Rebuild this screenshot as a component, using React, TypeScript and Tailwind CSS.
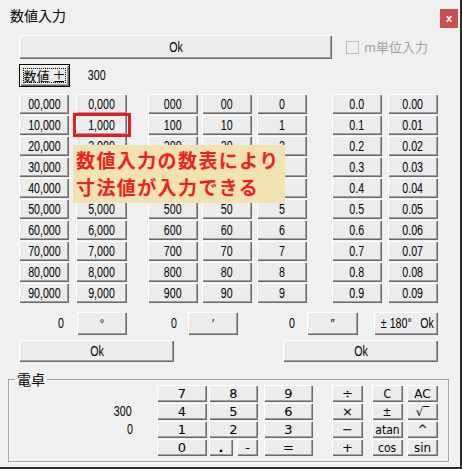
import clsx from "clsx";

const btn =
  "flex items-center justify-center bg-[#ececec] text-black shadow-[inset_1px_1px_#ffffff,inset_-1px_-1px_#696969,inset_-2px_-2px_#a0a0a0]";
const narrow = "font-['Liberation_Sans',sans-serif] text-[14px]";

function Btn({ children, className }: { children?: React.ReactNode; className?: string }) {
  return <button className={clsx(btn, className)}>{children}</button>;
}

// the dialog uses a tall narrow bitmap font, so squeeze the digits a bit
function N({ children }: { children: React.ReactNode }) {
  return <span className="inline-block scale-x-[0.76] whitespace-nowrap">{children}</span>;
}

const cols: { ml: string; w: string; items: string[] }[] = [
  { ml: "ml-[19px]", w: "w-[50px]", items: Array.from({ length: 10 }, (_, i) => `${i}0,000`) },
  { ml: "ml-[7px]", w: "w-[51px]", items: Array.from({ length: 10 }, (_, i) => `${i},000`) },
  { ml: "ml-[21px]", w: "w-[50px]", items: Array.from({ length: 10 }, (_, i) => `${i}00`) },
  { ml: "ml-[4px]", w: "w-[50px]", items: Array.from({ length: 10 }, (_, i) => `${i}0`) },
  { ml: "ml-[5px]", w: "w-[50px]", items: Array.from({ length: 10 }, (_, i) => `${i}`) },
  { ml: "ml-[25px]", w: "w-[50px]", items: Array.from({ length: 10 }, (_, i) => `0.${i}`) },
  { ml: "ml-[6px]", w: "w-[50px]", items: Array.from({ length: 10 }, (_, i) => `0.0${i}`) },
];

export default function App() {
  return (
    <div className="relative w-[462px] h-[469px] overflow-hidden bg-[#f0f0f0] border-r-2 border-b-2 border-[#2b2b2b] font-['Noto_Sans_CJK_JP',sans-serif] text-black">
      {/* title bar */}
      <div className="h-[30px] flex items-center justify-between pl-[10px] pr-[2px]">
        <span className="text-[14px]">数値入力</span>
        <div className="w-[18px] h-[19px] bg-[#c75050] flex items-center justify-center text-white text-[11px] font-bold font-['Liberation_Sans',sans-serif] mt-[6px]">
          x
        </div>
      </div>

      {/* Ok + checkbox */}
      <div className="mt-[5px] flex items-center">
        <Btn className={clsx("ml-[19px] w-[313px] h-[24px]", narrow)}>
          <N>Ok</N>
        </Btn>
        <div className="ml-[14px] w-[13px] h-[13px] border border-[#bcbcbc] bg-[#f0f0f0]" />
        <span className="ml-[5px] text-[13px] text-[#a0a0a0]">m単位入力</span>
      </div>

      {/* 数値 ± */}
      <div className="mt-[5px] flex items-center">
        <button className="ml-[19px] w-[51px] h-[23px] border border-black bg-[#ececec] shadow-[inset_1px_1px_#ffffff,inset_-1px_-1px_#696969,inset_-2px_-2px_#a0a0a0] p-[3px]">
          <div className="w-full h-full border border-dotted border-black flex items-center justify-center text-[13px] leading-none whitespace-nowrap">
            数値 ±
          </div>
        </button>
        <span className={clsx("ml-[15px]", narrow)}>
          <N>300</N>
        </span>
      </div>

      {/* number grid */}
      <div className={clsx("mt-[7px] flex", narrow)}>
        {cols.map((c, ci) => (
          <div key={ci} className={clsx("flex flex-col gap-[1px]", c.ml, c.w)}>
            {c.items.map((t) => (
              <Btn key={t} className="h-[20px] w-full">
                <N>{t}</N>
              </Btn>
            ))}
          </div>
        ))}
      </div>

      {/* degree row */}
      <div className={clsx("mt-[9px] flex items-center h-[23px]", narrow)}>
        <span className="ml-[19px] w-[46px] text-right">
          <N>0</N>
        </span>
        <Btn className="ml-[12px] w-[50px] h-[23px] text-[11px]">°</Btn>
        <span className="w-[51px] text-right">
          <N>0</N>
        </span>
        <Btn className="ml-[10px] w-[50px] h-[23px] text-[12px]">′</Btn>
        <span className="w-[58px] text-right">
          <N>0</N>
        </span>
        <Btn className="ml-[11px] w-[51px] h-[23px] text-[12px]">″</Btn>
        <Btn className="ml-[16px] w-[64px] h-[23px] gap-[2px]">
          <N>± 180°</N>
          <N>Ok</N>
        </Btn>
      </div>

      {/* Ok row */}
      <div className={clsx("mt-[5px] flex items-center", narrow)}>
        <Btn className="ml-[19px] w-[155px] h-[22px]">
          <N>Ok</N>
        </Btn>
        <Btn className="ml-[109px] w-[155px] h-[22px]">
          <N>Ok</N>
        </Btn>
      </div>

      {/* 電卓 */}
      <fieldset className="mt-[11px] ml-[8px] w-[441px] h-[89px] border border-[#a0a0a0] shadow-[inset_1px_1px_#ffffff,1px_1px_#ffffff] px-0">
        <legend className="ml-[6px] px-[2px] text-[14px] leading-[12px]">電卓</legend>
        <div className="flex font-['DejaVu_Sans',sans-serif] text-[13px]">
          <div className={clsx("w-[125px] flex flex-col gap-[1px]", narrow)}>
            <div className="h-[17px]" />
            <div className="h-[17px] flex items-center justify-end">
              <N>300</N>
            </div>
            <div className="h-[17px] flex items-center justify-end">
              <N>0</N>
            </div>
          </div>
          <div className="ml-[23px] flex flex-col gap-[1px]">
            <div className="flex h-[17px]">
              <Btn className="w-[50px]">7</Btn>
              <Btn className="ml-[2px] w-[49px]">8</Btn>
              <Btn className="ml-[6px] w-[49px]">9</Btn>
            </div>
            <div className="flex h-[17px]">
              <Btn className="w-[50px]">4</Btn>
              <Btn className="ml-[2px] w-[49px]">5</Btn>
              <Btn className="ml-[6px] w-[49px]">6</Btn>
            </div>
            <div className="flex h-[17px]">
              <Btn className="w-[50px]">1</Btn>
              <Btn className="ml-[2px] w-[49px]">2</Btn>
              <Btn className="ml-[6px] w-[49px]">3</Btn>
            </div>
            <div className="flex h-[17px]">
              <Btn className="w-[50px]">0</Btn>
              <Btn className="ml-[2px] w-[24px] font-bold">.</Btn>
              <Btn className="ml-[4px] w-[21px]">-</Btn>
              <Btn className="ml-[6px] w-[49px]">=</Btn>
            </div>
          </div>
          <div className="ml-[19px] flex flex-col gap-[1px]">
            {["÷", "×", "−", "+"].map((t) => (
              <Btn key={t} className="w-[31px] h-[17px]">
                {t}
              </Btn>
            ))}
          </div>
          <div className="ml-[9px] flex flex-col gap-[1px]">
            {["C", "±", "atan", "cos"].map((t) => (
              <Btn key={t} className="w-[31px] h-[17px] text-[12px]">
                <span className="inline-block scale-x-[0.9]">{t}</span>
              </Btn>
            ))}
          </div>
          <div className="ml-[4px] flex flex-col gap-[1px]">
            {["AC", "√‾", "^", "sin"].map((t) => (
              <Btn key={t} className="w-[31px] h-[17px] text-[12px]">
                {t}
              </Btn>
            ))}
          </div>
        </div>
      </fieldset>

      {/* annotation overlay */}
      <div className="absolute left-[73px] top-[113px] w-[58px] h-[24px] border-[3px] border-[#e02020]" />
      <div className="absolute left-[73px] top-[145px] w-[212px] h-[58px] bg-[#f1e2b2] pl-[3px] pt-[1px] text-[#ee2020] font-bold text-[19px] leading-[27px] tracking-[1.4px]">
        <div>数値入力の数表により</div>
        <div>寸法値が入力できる</div>
      </div>
    </div>
  );
}
